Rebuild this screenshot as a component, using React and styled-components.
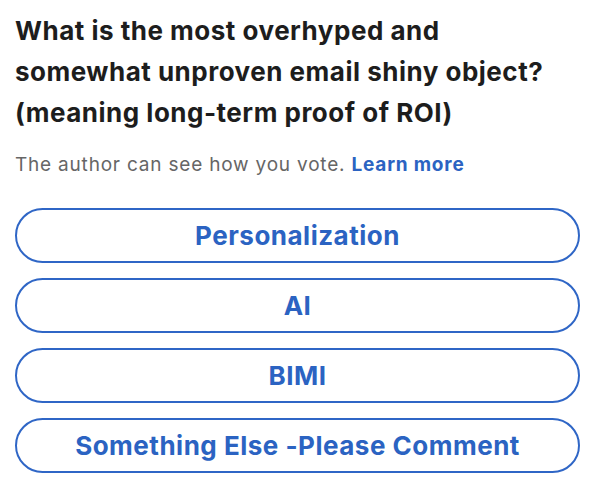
import React from 'react'
import styled, { createGlobalStyle } from 'styled-components'

const options = ['Personalization', 'AI', 'BIMI', 'Something Else -Please Comment']

export default function App() {
  return (
    <>
      <GlobalStyle />
      <Poll>
        <Question>
          What is the most overhyped and
          <br />
          somewhat unproven email shiny object?
          <br />
          (meaning long-term proof of ROI)
        </Question>
        <Notice>
          The author can see how you vote. <LearnMore href="#">Learn more</LearnMore>
        </Notice>
        <Options>
          {options.map((opt) => (
            <OptionButton key={opt}>{opt}</OptionButton>
          ))}
        </Options>
      </Poll>
    </>
  )
}

const GlobalStyle = createGlobalStyle`
  html, body {
    margin: 0;
    background: #fff;
  }
  body {
    font-family: Inter, "Noto Sans", "Liberation Sans", sans-serif;
  }
`

const Poll = styled.div`
  width: 600px;
  height: 490px;
  box-sizing: border-box;
  padding: 10px 20px 0 15px;
  display: flex;
  flex-direction: column;
`

const Question = styled.h1`
  margin: 0;
  font-size: 26px;
  line-height: 41px;
  font-weight: 700;
  color: #1d1d1d;
  letter-spacing: 0.5px;
  white-space: nowrap;
`

const Notice = styled.p`
  margin: 19px 0 0;
  font-size: 19px;
  line-height: 26px;
  color: #666;
  letter-spacing: 0.8px;
`

const LearnMore = styled.a`
  color: #2b63c2;
  font-weight: 700;
  text-decoration: none;
`

const Options = styled.div`
  margin-top: 30px;
  display: flex;
  flex-direction: column;
  gap: 15px;
`

const OptionButton = styled.button`
  height: 55px;
  width: 565px;
  border: 2px solid #2f66c6;
  border-radius: 28px;
  background: #fff;
  color: #2b63c2;
  font-family: inherit;
  font-size: 26px;
  font-weight: 700;
  letter-spacing: 0.5px;
  cursor: pointer;
  padding: 0 20px;
`
